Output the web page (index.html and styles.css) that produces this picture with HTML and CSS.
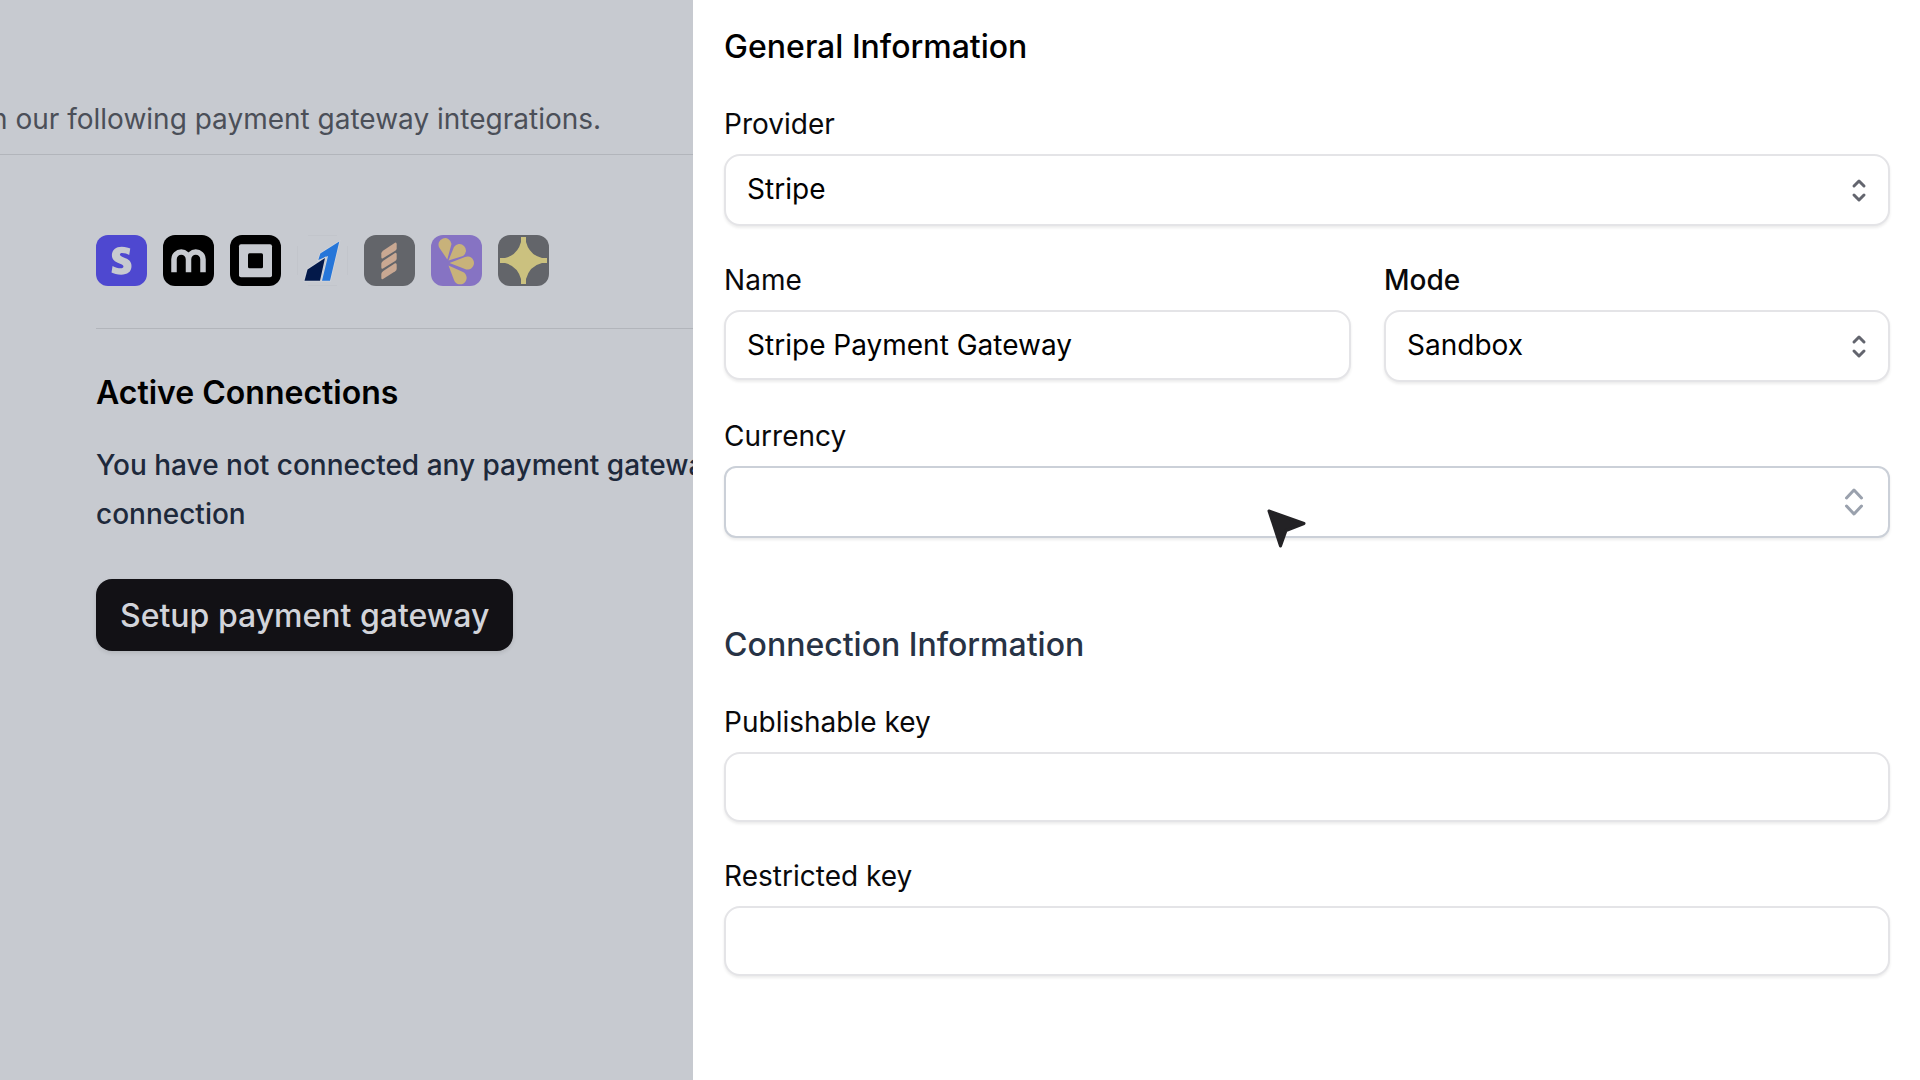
FILE: index.html
```html
<!DOCTYPE html>
<html lang="en">
<head>
  <meta charset="UTF-8">
  <meta name="viewport" content="width=device-width, initial-scale=1.0">
  <title>Payment gateways</title>
  <link rel="stylesheet" href="styles.css">
</head>
<body>
  <main class="page">
    <header class="page-header">
      <p>n our following payment gateway integrations.</p>
    </header>
    <div class="page-content">
      <div class="gateways">
        <svg class="gateway" viewBox="0 0 51 51" role="img" aria-label="Stripe">
          <rect width="51" height="51" rx="12" fill="#4e48d0"/>
          <path fill="#c7cad0" transform="translate(11.5 11.7) scale(1.167)" d="M13.976 9.15c-2.172-.806-3.356-1.426-3.356-2.409 0-.831.683-1.305 1.901-1.305 2.227 0 4.515.858 6.09 1.631l.89-5.494C18.252.975 15.697 0 12.165 0 9.667 0 7.589.654 6.104 1.872 4.56 3.147 3.757 4.992 3.757 7.218c0 4.039 2.467 5.76 6.476 7.219 2.585.92 3.445 1.574 3.445 2.583 0 .98-.84 1.545-2.354 1.545-1.875 0-4.965-.921-6.99-2.109l-.9 5.555C5.175 22.99 8.385 24 11.714 24c2.641 0 4.843-.624 6.328-1.813 1.664-1.305 2.525-3.236 2.525-5.732 0-4.128-2.524-5.851-6.591-7.305z"/>
        </svg>
        <svg class="gateway" viewBox="0 0 51 51" role="img" aria-label="Mollie">
          <rect width="51" height="51" rx="12" fill="#000"/>
          <path fill="none" stroke="#c7cad0" stroke-width="5.5" d="M11 37.3V24.200a7.200 7.200 0 0 1 14.500 0v13.100M25.500 24.200a7.200 7.200 0 0 1 14.500 0v13.100"/>
        </svg>
        <svg class="gateway" viewBox="0 0 51 51" role="img" aria-label="Square">
          <rect width="51" height="51" rx="12" fill="#000"/>
          <rect x="9" y="9.300" width="33" height="33" rx="2" fill="#c7cad0"/>
          <rect x="18" y="18.300" width="15" height="15" rx="1.500" fill="#000"/>
        </svg>
        <svg class="gateway" viewBox="0 0 51 51" role="img" aria-label="Razorpay">
          <path fill="none" stroke="#c2c5cb" d="M11 .5h29M11 50.500h29M.5 11v29M50.500 11v29"/>
          <g stroke="#d3d6dc" stroke-width="1.500" paint-order="stroke">
            <path fill="#2676d9" d="M42.300 6.500L33 45.700h-8l6-24.700-9.700 4 2-6.500z"/>
            <path fill="#03194a" d="M7.500 45.700L10.500 34.500 28 23 23 45.700z"/>
          </g>
        </svg>
        <svg class="gateway" viewBox="0 0 51 51" role="img" aria-label="Helcim">
          <rect width="51" height="51" rx="12" fill="#63656a"/>
          <g fill="#c9a892">
            <path id="ribbon" d="M17.300 18.500q0-1.500 2-3L31 7.700q1.700-.6 1.700 1.500v4q0 1.500-1.500 2.500L19 23.300q-1.500.8-1.700-1z"/>
            <use href="#ribbon" y="10.300"/>
            <use href="#ribbon" y="20.600"/>
          </g>
        </svg>
        <svg class="gateway" viewBox="0 0 51 51" role="img" aria-label="Lemon Squeezy">
          <rect width="51" height="51" rx="12" fill="#8673c3"/>
          <g fill="#c8b27a">
            <path d="M16.300 24.500L8.500 13A6.500 6.500 0 1 1 20.500 9z"/>
            <path d="M17.500 25.500L23 12a6.500 6.500 0 1 1 9 9z"/>
            <path d="M18.500 28L34 22a6.500 6.500 0 1 1 0 12z"/>
            <path d="M17.500 30.500L32 37a6.500 6.500 0 1 1-9 8z"/>
          </g>
        </svg>
        <svg class="gateway" viewBox="0 0 51 51" role="img" aria-label="Spark">
          <rect width="51" height="51" rx="12" fill="#63656a"/>
          <path fill="#cbc17f" d="M23 2h5v5Q31.500 20 44 23h5v5h-5Q31.500 31 28 44v5h-5v-5Q19.500 31 7 28H2v-5h5Q19.500 20 23 7z"/>
        </svg>
      </div>
      <section class="connections">
        <h2>Active Connections</h2>
        <p>You have not connected any payment gateway<br>connection</p>
        <button type="button" class="setup-btn">Setup payment gateway</button>
      </section>
    </div>
  </main>

  <form class="drawer">
    <h2 class="drawer-title">General Information</h2>
    <div class="field">
      <label for="provider">Provider</label>
      <div class="select-wrap">
        <select id="provider"><option>Stripe</option></select>
        <svg class="chevrons" viewBox="0 0 24 32"><path d="M7 12l5-5 5 5M7 21l5 5 5-5"/></svg>
      </div>
    </div>
    <div class="row">
      <div class="field">
        <label for="name">Name</label>
        <input type="text" id="name" value="Stripe Payment Gateway">
      </div>
      <div class="field">
        <label for="mode" class="strong">Mode</label>
        <div class="select-wrap">
          <select id="mode"><option>Sandbox</option></select>
          <svg class="chevrons" viewBox="0 0 24 32"><path d="M7 12l5-5 5 5M7 21l5 5 5-5"/></svg>
        </div>
      </div>
    </div>
    <div class="field">
      <label for="currency">Currency</label>
      <div class="select-wrap currency">
        <select id="currency"><option></option></select>
        <svg class="chevrons" viewBox="0 0 24 32"><path d="M4.500 12L12 4l7.500 8M4.500 20l7.500 8 7.500-8"/></svg>
        <svg class="cursor" viewBox="0 0 40 40"><path d="M2 2L37 14.500 19 21.500 13.500 37z"/></svg>
      </div>
    </div>
    <h2 class="drawer-title muted">Connection Information</h2>
    <div class="field">
      <label for="publishable">Publishable key</label>
      <input type="text" id="publishable">
    </div>
    <div class="field">
      <label for="restricted">Restricted key</label>
      <input type="text" id="restricted">
    </div>
  </form>
</body>
</html>
```
FILE: styles.css
```css
* {
  box-sizing: border-box;
}
body {
  margin: 0;
  min-height: 100vh;
  display: flex;
  font-family: Inter, sans-serif;
  font-size: 28px;
  color: #09090b;
  background: #fff;
}
h2,
p {
  margin: 0;
}

/* Dimmed page */
.page {
  flex: 0 0 36.1%;
  overflow: hidden;
  white-space: nowrap;
  background: #c7cad0;
}
.page-header {
  display: flex;
  justify-content: flex-end;
  padding: 99px 92px 14px 0;
  line-height: 41px;
  color: #4b4f58;
  border-bottom: 1px solid #b2b5bb;
}
.page-content {
  padding-left: 96px;
}
.gateways {
  display: flex;
  gap: 16px;
  padding: 80px 0 42px;
  border-bottom: 1px solid #b2b5bb;
}
.gateway {
  flex: none;
  width: 51px;
  height: 51px;
}
.connections {
  padding-top: 40px;
}
.connections h2 {
  font-size: 32px;
  line-height: 48px;
  font-weight: 600;
  color: #000;
}
.connections p {
  margin: 24px 0 40px;
  line-height: 49px;
  font-weight: 500;
  color: #1e293b;
}
.setup-btn {
  height: 72px;
  padding: 0 24px;
  border: none;
  border-radius: 16px;
  background: #121115;
  color: #d2d4da;
  font: 500 32px Inter, sans-serif;
  box-shadow: 0 2px 4px rgba(0, 0, 0, 0.1);
}

/* Drawer form */
.drawer {
  flex: 1;
  min-width: 0;
  padding: 24px 30px 24px 31px;
  display: flex;
  flex-direction: column;
  gap: 32px;
  background: #fff;
}
.drawer-title {
  font-size: 32px;
  line-height: 46px;
  font-weight: 500;
  color: #000;
}
.drawer-title.muted {
  margin-top: 52px;
  color: #283345;
}
.row {
  display: grid;
  grid-template-columns: 627fr 506fr;
  gap: 33px;
}
.field {
  display: flex;
  flex-direction: column;
  gap: 8px;
}
.field label {
  line-height: 44px;
}
.field label.strong {
  font-weight: 500;
}
input,
select {
  width: 100%;
  height: 70px;
  padding: 0 21px;
  border: 2px solid #e4e4e7;
  border-radius: 16px;
  background: #fff;
  color: #000;
  font: 28px Inter, sans-serif;
  outline: none;
  appearance: none;
  box-shadow: 0 2px 3px rgba(0, 0, 0, 0.08);
}
select {
  height: 72px;
  padding-bottom: 2px;
}
.select-wrap {
  position: relative;
}
.select-wrap select {
  display: block;
}
.chevrons {
  position: absolute;
  top: 20px;
  right: 19px;
  width: 24px;
  height: 32px;
  fill: none;
  stroke: #63656e;
  stroke-width: 3;
  stroke-linecap: round;
  stroke-linejoin: round;
  pointer-events: none;
}
.currency select {
  border-color: #cbd0d8;
  border-radius: 12px;
}
.currency .chevrons {
  right: 24px;
  stroke: #9aa1ad;
}
.cursor {
  position: absolute;
  top: 43px;
  left: 543px;
  width: 40px;
  height: 40px;
  fill: #232225;
  stroke: #232225;
  stroke-width: 3;
  stroke-linejoin: round;
}
```
